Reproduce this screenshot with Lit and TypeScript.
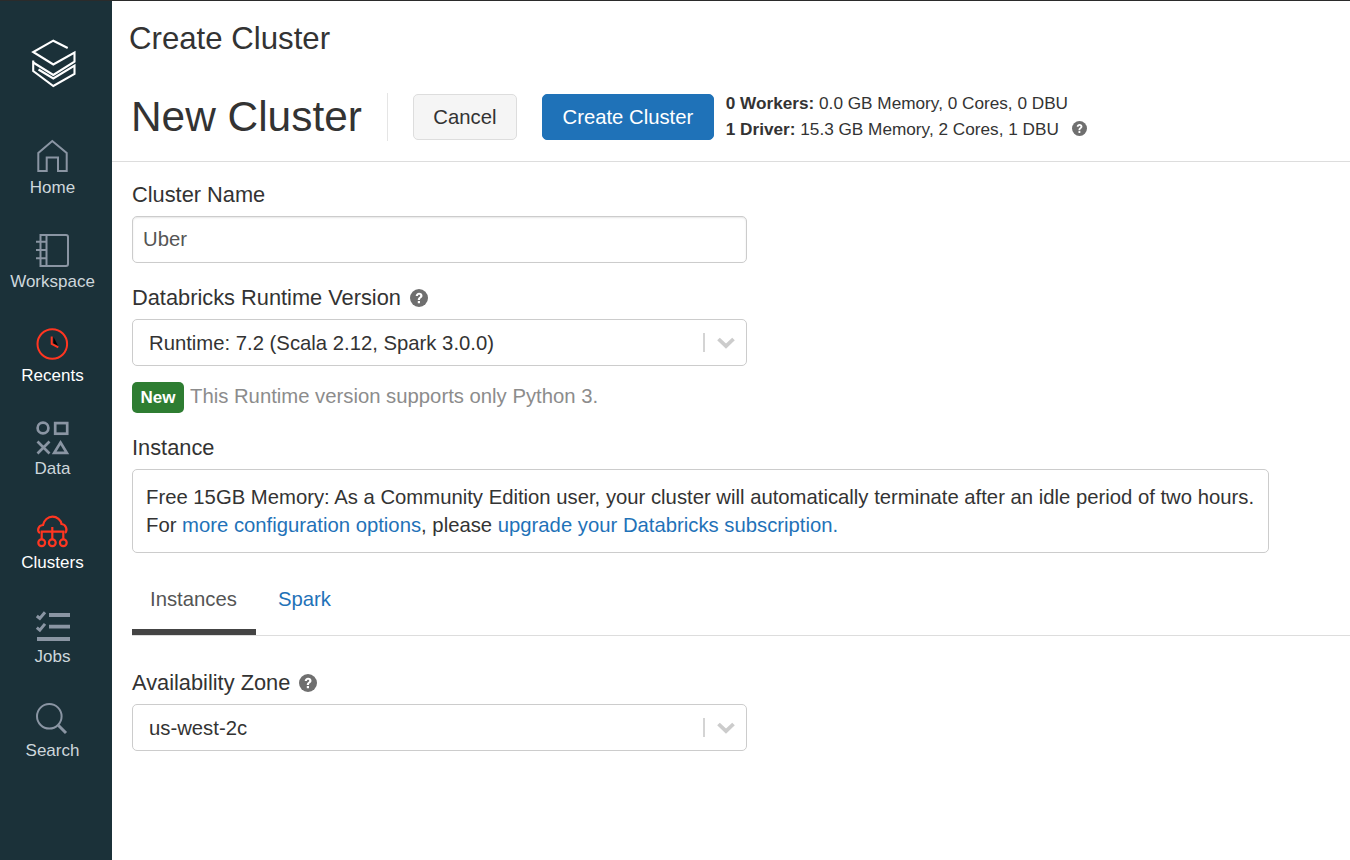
import { LitElement, html, css, svg } from "lit";
import { customElement } from "lit/decorators.js";

const GREY = "#8a95a3";
const RED = "#ff3621";

const icons: Record<string, unknown> = {
  home: svg`<svg class="ic" width="35" height="35" viewBox="0 0 35 35" fill="none" stroke="${GREY}" stroke-width="2"><path d="M3.300 33V15L17.300 3 31.700 15V33H23V19.500H11.700V33Z"/></svg>`,
  workspace: svg`<svg class="ic" width="35" height="35" viewBox="0 0 35 35" fill="none" stroke="${GREY}" stroke-width="2"><path d="M5.500 3H31a2 2 0 0 1 2 2V32a2 2 0 0 1-2 2H5.500Z M11.500 3V34"/><path d="M1 9.700H11M1 18H11M1 26.300H11"/></svg>`,
  recents: svg`<svg class="ic" width="35" height="35" viewBox="0 0 35 35" fill="none" stroke="${RED}" stroke-width="2"><circle cx="17.300" cy="18" r="14.800"/><path d="M18.500 11V17.500L23 19.800Z" fill="#000" stroke="none"/><path d="M16.700 10.500V18L23.300 21.300"/></svg>`,
  data: svg`<svg class="ic" width="35" height="35" viewBox="0 0 35 35" fill="none" stroke="${GREY}" stroke-width="2.700"><circle cx="8" cy="8" r="5.400"/><rect x="20.200" y="3.100" width="12" height="10.600"/><path d="M2.500 21.500L14.500 33.500M14.500 21.500L2.500 33.500"/><path d="M25.500 22.500L31.800 32.800H19.200Z"/></svg>`,
  clusters: svg`<svg class="ic" width="35" height="35" viewBox="0 0 35 35" fill="none" stroke="${RED}" stroke-width="2.200"><path d="M5 19C2 17.500 2.500 11.500 8 11C9 6 13 2.700 17.500 2.700C22 2.700 26 6 26.500 10C31 10.500 33 16 30 19"/><path d="M17.300 13V25M6.700 25V17.700H28.300V25"/><circle cx="6.700" cy="28.700" r="3.400"/><circle cx="17.300" cy="28.700" r="3.400"/><circle cx="28.300" cy="28.700" r="3.400"/></svg>`,
  jobs: svg`<svg class="ic" width="35" height="35" viewBox="0 0 35 35" fill="none" stroke="${GREY}" stroke-width="3.800"><path d="M14 7H35M14 18.700H35M2 31H35"/><path stroke-width="3" d="M1.800 8L4.800 10.500 10 4.200M1.800 19.700L4.800 22.200 10 15.900"/></svg>`,
  search: svg`<svg class="ic" width="35" height="35" viewBox="0 0 35 35" fill="none" stroke="${GREY}" stroke-width="2"><circle cx="14.300" cy="14.300" r="12.300"/><path d="M23.500 23.500L31 31" stroke-width="3"/></svg>`,
};

const nav = [
  ["home", "Home", false],
  ["workspace", "Workspace", false],
  ["recents", "Recents", true],
  ["data", "Data", false],
  ["clusters", "Clusters", true],
  ["jobs", "Jobs", false],
  ["search", "Search", false],
] as const;

const help = (size: number) => html`<svg class="help" width="${size}" height="${size}" viewBox="0 0 18 18"><circle cx="9" cy="9" r="9" fill="#6f6f6f"/><path d="M5.700 7C5.800 5 7.200 3.700 9.100 3.700 11.100 3.700 12.500 5 12.500 6.700 12.500 8 11.800 8.700 10.900 9.300 10.200 9.800 10 10.100 10 11H7.800C7.800 9.600 8.200 8.900 9.100 8.200 9.900 7.700 10.200 7.400 10.200 6.800 10.200 6.200 9.800 5.800 9.100 5.800 8.400 5.800 8 6.300 7.900 7Z M7.800 12H10V14.300H7.800Z" fill="#fff"/></svg>`;

const chevron = html`<span class="sep"></span><svg width="18" height="12" viewBox="0 0 18 12" fill="none" stroke="#cccccc" stroke-width="3.800"><path d="M1.500 2L9 9.200 16.500 2"/></svg>`;

@customElement("app-root")
export class AppRoot extends LitElement {
  static styles = css`
    :host {
      display: block;
      width: 1350px;
      height: 860px;
      overflow: hidden;
      background: #fff;
      font-family: "Liberation Sans", Arial, sans-serif;
      color: #333;
      font-size: 20.300px;
    }
    * { box-sizing: border-box; }
    .page { display: flex; height: 860px; border-top: 1px solid #2b2b2b; }
    .side {
      width: 112px;
      flex: none;
      background: #1b3139;
      padding-right: 7px;
      display: flex;
      flex-direction: column;
      align-items: center;
    }
    .logo { height: 137px; flex: none; padding-top: 37px; }
    .logo svg { display: block; }
    .item {
      height: 94px;
      flex: none;
      width: 100%;
      display: flex;
      flex-direction: column;
      align-items: center;
      font-size: 17px;
      line-height: 18px;
      color: #ced7dc;
    }
    .item.on { color: #fff; }
    .ic { display: block; margin-bottom: 5px; }
    .item:nth-child(-n+4) .ic { margin-bottom: 6px; }
    .main { flex: 1; min-width: 0; display: flex; flex-direction: column; }
    h1.crumb {
      margin: 0;
      font-weight: 400;
      font-size: 31.200px;
      line-height: 34px;
      padding: 21px 0 0 17px;
      color: #333;
      height: 71px;
    }
    .head {
      display: flex;
      align-items: center;
      height: 90px;
      padding: 22px 0 21px 19px;
      border-bottom: 1px solid #ddd;
    }
    h2 {
      margin: 0;
      font-weight: 400;
      font-size: 42.400px;
      line-height: 48px;
      color: #333;
      padding-right: 25px;
      border-right: 1px solid #e5e5e5;
    }
    .btn {
      height: 46px;
      display: flex;
      align-items: center;
      border-radius: 5px;
      border: 1px solid #ddd;
    }
    .cancel { background: #f5f5f5; color: #333; padding: 0 19.500px; margin-left: 25px; }
    .create { background: #1f72b8; border-color: #1f72b8; color: #fff; padding: 0 19.500px; margin-left: 25px; }
    .stats { margin: -2px 0 0 12px; font-size: 17.200px; line-height: 26px; color: #333; }
    .stats b { font-weight: 700; }
    .stats .help { margin-left: 13px; vertical-align: -1px; }
    .body { padding: 20px 0 0 20px; display: flex; flex-direction: column; }
    .label { height: 24px; padding-top: 2px; line-height: 22px; display: flex; align-items: center; gap: 9px; color: #333; font-size: 21.800px; }
    .input, .select {
      width: 615px;
      height: 47px;
      border: 1px solid #ccc;
      border-radius: 5px;
      margin-top: 10px;
      display: flex;
      align-items: center;
      color: #333;
    }
    .input {
      padding-left: 10px;
      color: #555;
      box-shadow: inset 0 1px 2px rgba(0,0,0,.1);
      margin-bottom: 22px;
    }
    .select { padding: 0 11px 0 16px; justify-content: space-between; }
    .value { padding-top: 2px; }
    .chev { display: flex; align-items: center; }
    .sep { width: 2px; height: 19px; background: #d4d4d4; margin-right: 12px; }
    .note { display: flex; align-items: flex-start; margin-top: 15px; height: 31px; line-height: 31px; color: #8c8c8c; gap: 6px; }
    .badge {
      background: #2e7d32;
      color: #fff;
      font-size: 17px;
      font-weight: 700;
      height: 31px;
      line-height: 31px;
      width: 52px;
      margin-top: 1px;
      text-align: center;
      border-radius: 5px;
    }
    .instance-label { margin-top: 23px; }
    .panel {
      width: 1137px;
      height: 84px;
      margin-top: 10px;
      border: 1px solid #ccc;
      border-radius: 5px;
      padding: 13px 13px;
      line-height: 28px;
      color: #333;
      white-space: nowrap;
    }
    a { color: #1f72b8; text-decoration: none; }
    .tabs {
      display: flex;
      height: 83px;
      border-bottom: 1px solid #ddd;
    }
    .tab { height: 82px; padding: 34px 18px 0; line-height: 24px; }
    .tab.on { width: 124px; border-bottom: 6px solid #444; color: #555; }
    .tab.link { padding-left: 22px; color: #1f72b8; }
    .zone { margin-top: 34px; }
  `;

  render() {
    return html`<div class="page">
      <nav class="side">
        <div class="logo">
          <svg width="47" height="50" viewBox="0 0 47 50" fill="none" stroke="#fff" stroke-width="2.100">
            <path d="M38.700 10L24.300 2.700 4.200 14 24.300 26.500 45.500 14.500V23.700L24.300 37 4.200 24.500"/>
            <path d="M4.200 22.500V33L24.300 48 45.500 36V27.700L24.300 40.500 9.500 31.500"/>
          </svg>
        </div>
        ${nav.map(([ic, label, on]) => html`<div class="item ${on ? "on" : ""}">${icons[ic]}<span>${label}</span></div>`)}
      </nav>
      <main class="main">
        <h1 class="crumb">Create Cluster</h1>
        <div class="head">
          <h2>New Cluster</h2>
          <div class="btn cancel">Cancel</div>
          <div class="btn create">Create Cluster</div>
          <div class="stats">
            <div><b>0 Workers:</b> 0.0 GB Memory, 0 Cores, 0 DBU</div>
            <div><b>1 Driver:</b> 15.3 GB Memory, 2 Cores, 1 DBU${help(15)}</div>
          </div>
        </div>
        <div class="body">
          <div class="label">Cluster Name</div>
          <div class="input">Uber</div>
          <div class="label">Databricks Runtime Version ${help(18)}</div>
          <div class="select"><span class="value">Runtime: 7.2 (Scala 2.12, Spark 3.0.0)</span><span class="chev">${chevron}</span></div>
          <div class="note"><span class="badge">New</span><span>This Runtime version supports only Python 3.</span></div>
          <div class="label instance-label">Instance</div>
          <div class="panel">Free 15GB Memory: As a Community Edition user, your cluster will automatically terminate after an idle period of two hours.<br>For <a>more configuration options</a>, please <a>upgrade your Databricks subscription.</a></div>
          <div class="tabs"><div class="tab on">Instances</div><div class="tab link">Spark</div></div>
          <div class="label zone">Availability Zone ${help(18)}</div>
          <div class="select"><span class="value">us-west-2c</span><span class="chev">${chevron}</span></div>
        </div>
      </main>
    </div>`;
  }
}
